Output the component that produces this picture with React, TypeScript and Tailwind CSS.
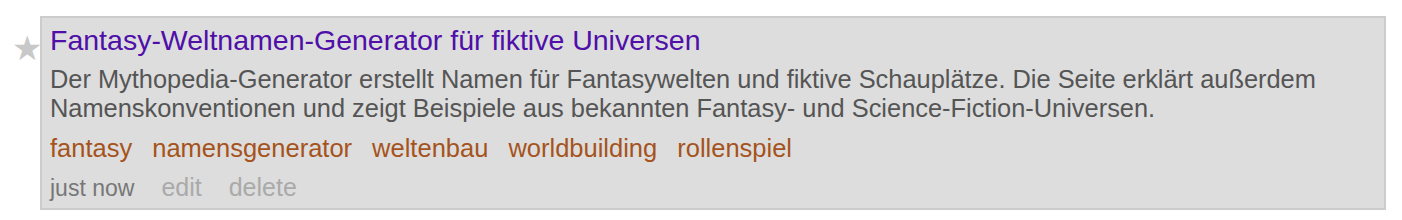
const tags = ["fantasy", "namensgenerator", "weltenbau", "worldbuilding", "rollenspiel"];

export default function App() {
  return (
    <div className="min-h-[220px] bg-white pt-4 pl-10 pr-4 font-['Liberation_Sans',Arial,sans-serif]">
      <div className="relative border-2 border-[#cccccc] bg-[#dddddd] px-2 pt-[6px] pb-[6px]">
        <span className="absolute left-[-30px] top-[13px] text-[34px] leading-none text-[#c8c8c8]">★</span>
        <a href="#" className="block text-[28.5px] leading-[32px] text-[#4f0fa8]">
          Fantasy-Weltnamen-Generator für fiktive Universen
        </a>
        <p className="mt-[9px] text-[25.4px] leading-[29px] text-[#555555]">
          Der Mythopedia-Generator erstellt Namen für Fantasywelten und fiktive Schauplätze. Die Seite erklärt außerdem
          <br />
          Namenskonventionen und zeigt Beispiele aus bekannten Fantasy- und Science-Fiction-Universen.
        </p>
        <div className="mt-[10px] flex gap-[20px] text-[25.5px] leading-[30px] text-[#a5531c]">
          {tags.map((t) => (
            <a key={t} href="#">
              {t}
            </a>
          ))}
        </div>
        <div className="mt-[10px] flex items-baseline gap-[27px] leading-[28px] text-[#aaaaaa]">
          <span className="text-[23px] text-[#777777]">just now</span>
          <a href="#" className="text-[25px]">edit</a>
          <a href="#" className="text-[25px]">delete</a>
        </div>
      </div>
    </div>
  );
}
